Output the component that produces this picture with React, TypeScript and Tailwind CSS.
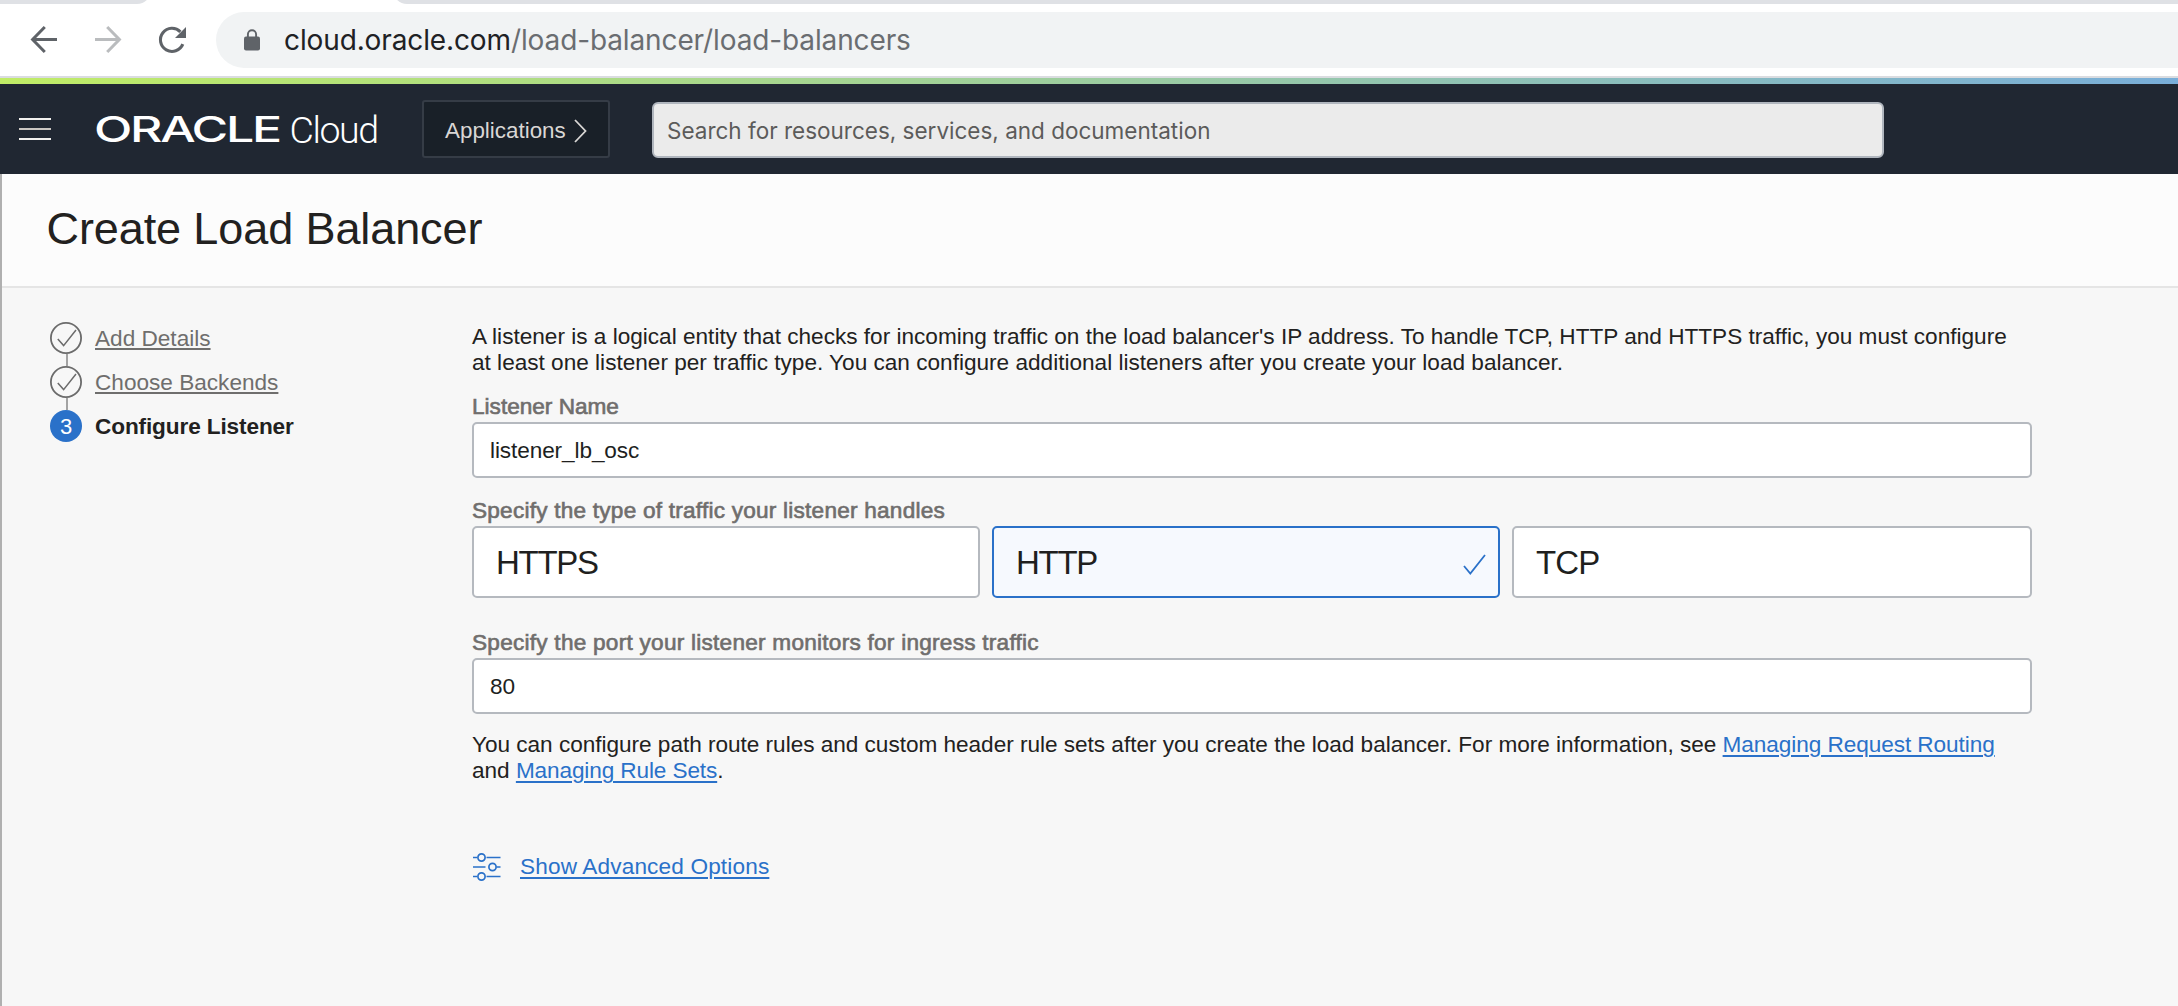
import type { ReactNode } from "react";

function TabStrip() {
  return (
    <div className="flex h-1 items-end justify-between overflow-hidden bg-white">
      <div className="h-5 w-[151px] shrink-0 rounded-br-[14px] bg-[#dfe1e5]" />
      <div className="h-5 w-[1785px] shrink-0 rounded-bl-[14px] bg-[#dfe1e5]" />
    </div>
  );
}

function Toolbar() {
  return (
    <div className="flex h-[74px] items-start border-b-2 border-[#dadce0] bg-white pt-2">
      <svg className="h-14 w-[216px] shrink-0" viewBox="0 0 216 56" fill="none" strokeWidth="3">
        <path d="M57 27.5H33M44.8 15L32.6 27.5L44.8 40" stroke="#5f6368" />
        <path d="M95 27.5h24M107.2 15l12.2 12.5L107.2 40" stroke="#babcbe" />
        <path d="M182.8 32.2A11.6 11.6 0 1 1 180.4 19.8" stroke="#5f6368" strokeWidth="3.1" />
        <path d="M186 15V26H175Z" fill="#5f6368" />
      </svg>
      <div className="flex h-14 flex-1 items-center rounded-l-full bg-[#f1f3f4] pl-7">
        <svg className="mr-6 h-[22px] w-4 shrink-0" viewBox="0 0 16 22" fill="none">
          <path d="M3.9 8.5V5.3a4.1 4.1 0 0 1 8.2 0V8.5" stroke="#5f6368" strokeWidth="1.9" />
          <rect x="0" y="7.5" width="16" height="14" rx="2" fill="#5f6368" />
        </svg>
        <span className="whitespace-nowrap font-[Inter,sans-serif] text-[28px] leading-8 tracking-[-0.12px] text-[#202124]">
          cloud.oracle.com<span className="text-[#6a6d71]">/load-balancer/load-balancers</span>
        </span>
      </div>
    </div>
  );
}

function NavBar() {
  return (
    <nav className="flex h-[90px] items-start bg-[#202732]">
      <div className="mt-[34px] ml-[19px] flex w-8 shrink-0 flex-col gap-2">
        <span className="h-0.5 bg-[#f2f1ef]" />
        <span className="h-0.5 bg-[#c9c5c1]" />
        <span className="h-0.5 bg-[#f2f1ef]" />
      </div>
      <div className="mt-[26px] ml-[43px] flex h-10 w-[328px] shrink-0 items-center whitespace-nowrap text-white">
        <span className="w-[195.5px] shrink-0">
          <span className="inline-block origin-left scale-x-[1.43] font-[Inter,sans-serif] text-[35px] leading-10 font-medium tracking-[-1.6px]">
            ORACLE
          </span>
        </span>
        <span className="font-[Roboto,sans-serif] text-[37.5px] leading-10 font-light tracking-[-1.4px]">Cloud</span>
      </div>
      <button className="mt-4 flex h-[58px] w-[188px] shrink-0 items-center rounded-[3px] border-2 border-[#353c46] bg-[#192028] pl-[21px] text-[22.4px] leading-7 text-[#d9d7d5]">
        <span className="pt-1">Applications</span>
        <svg className="mt-1 ml-[7px] h-6 w-[15px]" viewBox="0 0 15 24" fill="none">
          <path d="M2 1L12.5 12L2 23" stroke="#d9d7d5" strokeWidth="1.8" />
        </svg>
      </button>
      <div className="mt-[18px] ml-[42px] flex h-14 w-[1232px] shrink-0 items-center rounded-[6px] border-2 border-[#b0b6be] bg-[#ebebeb] pt-px pl-[13px] font-[Inter,sans-serif] text-[22.5px] text-[#5c5b5a]">
        Search for resources, services, and documentation
      </div>
    </nav>
  );
}

function Step({ label }: { label: string }) {
  return (
    <li className="flex flex-col">
      <div className="flex h-8 items-center gap-[13px]">
        <svg className="size-8 shrink-0" viewBox="0 0 32 32" fill="none" stroke="#6b6b6b">
          <circle cx="16" cy="16" r="15.1" strokeWidth="1.8" />
          <path d="M7.8 17L13.6 23.6L26 8" strokeWidth="1.5" />
        </svg>
        <a className="pt-0.5 text-[#6f6e6d] underline decoration-2 underline-offset-2">{label}</a>
      </div>
      <div className="ml-4 h-3 w-0.5 bg-[#a3a3a3]" />
    </li>
  );
}

function Label({ children, className }: { children: ReactNode; className: string }) {
  return <label className={`block leading-6 text-[#706e6d] [-webkit-text-stroke:0.65px_#706e6d] ${className}`}>{children}</label>;
}

function TextBox({ value }: { value: string }) {
  return (
    <div className="flex h-14 items-center rounded-[5px] border-2 border-[#b5b9bf] bg-white pt-0.5 pl-4 tracking-[-0.1px] text-[#201f1e]">
      {value}
    </div>
  );
}

function Link({ children, className }: { children: ReactNode; className: string }) {
  return <a className={`text-[#2a71c9] underline decoration-2 underline-offset-[3px] ${className}`}>{children}</a>;
}

export default function App() {
  return (
    <div className="flex h-[1006px] w-[2178px] flex-col overflow-hidden bg-white font-[Liberation_Sans,sans-serif] text-[22.6px] text-[#222120]">
      <TabStrip />
      <Toolbar />
      <div className="h-1.5 bg-linear-to-r/srgb from-[#c0ec66] to-[#79aed9]" />
      <NavBar />
      <div className="flex flex-1 flex-col border-l-2 border-[#b0b0b0]">
        <header className="flex h-[114px] items-center border-b-2 border-[#e5e5e5] bg-[#fcfcfc] pb-[3px] pl-[44.5px]">
          <h1 className="text-[45px] leading-[50px] tracking-[-0.1px]">Create Load Balancer</h1>
        </header>
        <div className="flex flex-1 bg-[#f7f7f7]">
          <ol className="w-[422px] shrink-0 pt-[34px] pl-12">
            <Step label="Add Details" />
            <Step label="Choose Backends" />
            <li className="flex h-8 items-center gap-[13px]">
              <span className="flex size-8 items-center justify-center rounded-full bg-[#2a71c9] pt-px text-[22px] text-white">3</span>
              <span className="pt-0.5 font-bold tracking-[-0.12px]">Configure Listener</span>
            </li>
          </ol>
          <main className="ml-12 w-[1560px] shrink-0 pt-9">
            <p className="leading-[26px] whitespace-nowrap">
              A listener is a logical entity that checks for incoming traffic on the load balancer's IP address. To handle TCP, HTTP and HTTPS traffic, you must configure
              <br />
              at least one listener per traffic type. You can configure additional listeners after you create your load balancer.
            </p>
            <Label className="mt-[19px] mb-[3px]">Listener Name</Label>
            <TextBox value="listener_lb_osc" />
            <Label className="mt-[21px] mb-[3px] tracking-[0.23px]">Specify the type of traffic your listener handles</Label>
            <div className="flex h-[72px] gap-3 text-[33px] tracking-[-1.3px] text-[#201f1e]">
              <div className="flex w-[508px] items-center rounded-[5px] border-2 border-[#b5b9bf] bg-white pt-px pl-[22px]">HTTPS</div>
              <div className="flex w-[508px] items-center justify-between rounded-[5px] border-2 border-[#2a71c9] bg-[#f6f9fe] pt-px pr-[12px] pl-[22px]">
                HTTP
                <svg className="mt-1 h-[22px] w-[23px]" viewBox="0 0 23 22" fill="none">
                  <path d="M1 12L7.3 19.5L22 1" stroke="#2a71c9" strokeWidth="1.8" />
                </svg>
              </div>
              <div className="flex flex-1 items-center rounded-[5px] border-2 border-[#b5b9bf] bg-white pt-px pl-[22px] tracking-[-0.9px]">TCP</div>
            </div>
            <Label className="mt-[33px] mb-[3px] tracking-[0.25px]">Specify the port your listener monitors for ingress traffic</Label>
            <TextBox value="80" />
            <p className="mt-[18px] leading-[26px] tracking-[-0.026px] whitespace-nowrap">
              You can configure path route rules and custom header rule sets after you create the load balancer. For more information, see{" "}
              <Link className="tracking-[-0.07px]">Managing Request Routing</Link>
              <br />
              and <Link className="tracking-[-0.12px]">Managing Rule Sets</Link>.
            </p>
            <div className="mt-[69px] flex h-7 items-center gap-[19px]">
              <svg className="h-7 w-[29px]" viewBox="0 0 29 28" fill="none" stroke="#2a71c9" strokeWidth="1.7">
                <path d="M1 4.5H5M14.5 4.5H28.5M1 14H13.5M24.5 14H28.5M1 23.5H5M14.5 23.5H28.5" />
                <circle cx="9.5" cy="4.5" r="3.6" />
                <circle cx="20.5" cy="14" r="3.6" />
                <circle cx="9.5" cy="23.5" r="3.6" />
              </svg>
              <Link className="tracking-[0.15px]">Show Advanced Options</Link>
            </div>
          </main>
        </div>
      </div>
    </div>
  );
}
